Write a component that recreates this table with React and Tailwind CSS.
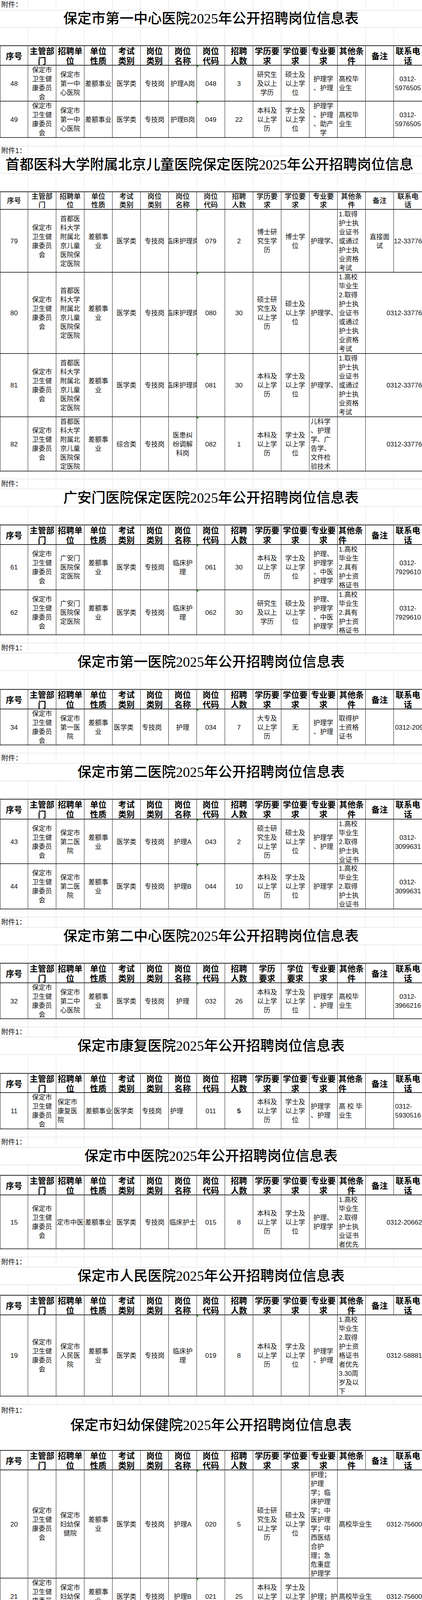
import React from 'react';

// 主管部门 is the same in every row
const ZG = '保定市\n卫生健\n康委员\n会';
const ZD = '首都医\n科大学\n附属北\n京儿童\n医院保\n定医院';

const L = (t, o = {}) => ({ t, left: true, ...o });
const clip = (t, o = {}) => ({ t, clip: true, ...o });
const over = (t, o = {}) => ({ t, over: true, ...o });
const E = { t: '', noRight: true };

const HEAD = [
    '序号', '主管部\n门', '招聘单\n位', '单位\n性质', '考试\n类别', '岗位\n类别', '岗位\n名称',
    '岗位\n代码', '招聘\n人数', '学历要\n求', '学位要\n求', '专业要\n求', '其他条\n件', '备注', '联系电\n话',
];

const sections = [
    {
        attach: '附件：', ah: 'h-[27px]', th: 'h-[44px]', bh: 'h-[45px]', hh: 'h-[52px]', gh: 'h-[22px]', tri: true,
        title: '保定市第一中心医院2025年公开招聘岗位信息表',
        rows: [
            { h: 'h-[92px]', c: ['48', ZG, '保定市\n第一中\n心医院', '差额事业', '医学类', '专技岗', '护理A岗', '048', '3', '研究生\n及以上\n学历', '硕士及\n以上学\n位', '护理学\n、护理', L('高校毕\n业生'), '', '0312-\n5976505'] },
            { h: 'h-[93px]', c: ['49', ZG, '保定市\n第一中\n心医院', '差额事业', '医学类', '专技岗', '护理B岗', '049', '22', '本科及\n以上学\n历', '学士及\n以上学\n位', '护理学\n、护理\n、助产\n学', L('高校毕\n业生'), '', '0312-\n5976505'] },
        ],
    },
    {
        attach: '附件1：', ah: 'h-[25px]', th: 'h-[45px]', bh: 'h-[45px]', hh: 'h-[47px]', gh: 'h-[20px]', tri: true, thin: true, titleLeft: true,
        title: '首都医科大学附属北京儿童医院保定医院2025年公开招聘岗位信息表',
        rows: [
            { h: 'h-[161px]', c: ['79', ZG, ZD, '差额事\n业', '医学类', '专技岗', clip('临床护理岗'), '079', '2', '博士研\n究生学\n历', '博士学\n位', L('护理学、'), L('1.取得\n护士执\n业证书\n或通过\n护士执\n业资格\n考试'), '直接面\n试', clip('0312-3377628')] },
            { h: 'h-[208px]', c: ['80', ZG, ZD, '差额事\n业', '医学类', '专技岗', clip('临床护理岗'), '080', '30', '硕士研\n究生及\n以上学\n历', '硕士及\n以上学\n位', L('护理学、'), L('1.高校\n毕业生\n2.取得\n护士执\n业证书\n或通过\n护士执\n业资格\n考试'), E, over('0312-3377628')] },
            { h: 'h-[162px]', c: ['81', ZG, ZD, '差额事\n业', '医学类', '专技岗', clip('临床护理岗'), '081', '30', '本科及\n以上学\n历', '学士及\n以上学\n位', L('护理学、'), L('1.取得\n护士执\n业证书\n或通过\n护士执\n业资格\n考试'), E, over('0312-3377628')] },
            { h: 'h-[139px]', c: ['82', ZG, ZD, '差额事\n业', '综合类', '专技岗', '医患纠\n纷调解\n科岗', '082', '1', '本科及\n以上学\n历', '学士及\n以上学\n位', L('儿科学\n、护理\n学、广\n告学、\n文件检\n验技术'), '', E, over('0312-3377628')] },
        ],
    },
    {
        attach: '附件：', ah: 'h-[26px]', th: 'h-[45px]', bh: 'h-[45px]', hh: 'h-[52px]', gh: 'h-[21px]', tri: true, qitaLeft: true,
        title: '广安门医院保定医院2025年公开招聘岗位信息表',
        rows: [
            { h: 'h-[116px]', c: ['61', ZG, '广安门\n医院保\n定医院', '差额事\n业', '医学类', '专技岗', '临床护\n理', '061', '30', '本科及\n以上学\n历', '学士及\n以上学\n位', '护理、\n护理学\n、中医\n护理学', L('1.高校\n毕业生\n2.具有\n护士资\n格证书'), '', '0312-\n7929610'] },
            { h: 'h-[115px]', c: ['62', ZG, '广安门\n医院保\n定医院', '差额事\n业', '医学类', '专技岗', '临床护\n理', '062', '30', '研究生\n及以上\n学历', '硕士及\n以上学\n位', '护理、\n护理学\n、中医\n护理学', L('1.高校\n毕业生\n2.具有\n护士资\n格证书'), '', '0312-\n7929610'] },
        ],
    },
    {
        attach: '附件1：', ah: 'h-[26px]', th: 'h-[45px]', bh: 'h-[46px]', hh: 'h-[52px]', gh: 'h-[21px]', tri: true,
        title: '保定市第一医院2025年公开招聘岗位信息表',
        rows: [
            { h: 'h-[92px]', c: ['34', ZG, '保定市\n第一医\n院', '差额事\n业', L('医学类'), L('专技岗'), '护理', '034', '7', '大专及\n以上学\n历', '无', '护理学\n、护理', L('取得护\n士资格\n证书'), '', L('0312-2093316', { nowrap: true })] },
        ],
    },
    {
        attach: '附件：', ah: 'h-[26px]', th: 'h-[45px]', bh: 'h-[45px]', hh: 'h-[53px]', gh: 'h-[21px]', tri: true,
        title: '保定市第二医院2025年公开招聘岗位信息表',
        rows: [
            { h: 'h-[114px]', c: ['43', ZG, '保定市\n第二医\n院', '差额事\n业', '医学类', '专技岗', '护理A', '043', '2', '硕士研\n究生及\n以上学\n历', '硕士及\n以上学\n位', '护理学\n、护理', L('1.高校\n毕业生\n2.取得\n护士执\n业证书'), '', '0312-\n3099631'] },
            { h: 'h-[116px]', c: ['44', ZG, '保定市\n第二医\n院', '差额事\n业', '医学类', '专技岗', '护理B', '044', '10', '本科及\n以上学\n历', '学士及\n以上学\n位', '护理学', L('1.高校\n毕业生\n2.取得\n护士执\n业证书'), '', '0312-\n3099631'] },
        ],
    },
    {
        attach: '附件1：', ah: 'h-[26px]', th: 'h-[45px]', bh: 'h-[45px]', hh: 'h-[52px]', gh: 'h-[21px]', tri: true, xl: true,
        title: '保定市第二中心医院2025年公开招聘岗位信息表',
        rows: [
            { h: 'h-[92px]', c: ['32', ZG, '保定市\n第二中\n心医院', '差额事\n业', '医学类', '专技岗', '护理', '032', '26', '本科及\n以上学\n历', '学士及\n以上学\n位', '护理学\n、护理', L('高校毕\n业生'), '', '0312-\n3966216'] },
        ],
    },
    {
        attach: '附件1：', ah: 'h-[26px]', th: 'h-[45px]', bh: 'h-[46px]', hh: 'h-[51px]', gh: 'h-[21px]', qitaLeft: true,
        title: '保定市康复医院2025年公开招聘岗位信息表',
        rows: [
            { h: 'h-[93px]', c: ['11', ZG, L('保定市\n康复医\n院'), L('差额事业'), L('医学类'), L('专技岗'), L('护理'), '011', { t: '5', bold: true }, '本科及\n以上学\n历', '学士及\n以上学\n位', L('护理学\n、护理'), L('高 校 毕\n业生'), '', L('0312-\n5930516')] },
        ],
    },
    {
        attach: '附件1：', ah: 'h-[26px]', th: 'h-[45px]', bh: 'h-[25px]', hh: 'h-[52px]', gh: 'h-[21px]',
        title: '保定市中医院2025年公开招聘岗位信息表',
        rows: [
            { h: 'h-[138px]', c: ['15', ZG, clip('保定市中医院'), '差额事业', '医学类', '专技岗', '临床护士', '015', '8', '本科及\n以上学\n历', '学士及\n以上学\n位', '护理、\n护理学', L('1.高校\n毕业生\n2.取得\n护士执\n业证书\n者优先'), E, over('0312-2066218')] },
        ],
    },
    {
        attach: '附件1：', ah: 'h-[26px]', th: 'h-[45px]', bh: 'h-[25px]', hh: 'h-[52px]', gh: 'h-[21px]', tri: true,
        title: '保定市人民医院2025年公开招聘岗位信息表',
        rows: [
            { h: 'h-[208px]', c: ['19', ZG, '保定市\n人民医\n院', '差额事\n业', '医学类', '专技岗', '临床护\n理', '019', '8', '本科及\n以上学\n历', '学士及\n以上学\n位', '护理学\n、护理', L('1.高校\n毕业生\n2.取得\n护士资\n格证书\n者优先\n3.30周\n岁及以\n下'), E, over('0312-5888180')] },
        ],
    },
    {
        attach: '附件1：', ah: 'h-[30px]', th: 'h-[45px]', bh: 'h-[41px]', hh: 'h-[52px]', tri: true, plain: true,
        title: '保定市妇幼保健院2025年公开招聘岗位信息表',
        rows: [
            { h: 'h-[277px]', c: ['20', ZG, '保定市\n妇幼保\n健院', '差额事\n业', '医学类', '专技岗', '护理A', '020', '5', '硕士研\n究生及\n以上学\n历', '硕士及\n以上学\n位', L('护理；\n护理\n学；临\n床护理\n学；中\n医护理\n学；中\n西医结\n合护\n理；急\n危重症\n护理学'), L('高校毕业生', { nowrap: true, noRight: true }), E, over('0312-7560062')] },
            { h: 'h-[92px]', c: ['21', ZG, '保定市\n妇幼保\n健院', '差额事\n业', '医学类', '专技岗', '护理B', '021', '25', '本科及\n以上学\n历', '学士及\n以上学\n位', L('护理；护', { nowrap: true, clip: true }), L('高校毕业生', { nowrap: true, noRight: true }), E, over('0312-7560062')] },
        ],
    },
];

function GridRow({ h, lines = true, children }) {
    return (
        <div className={`relative grid grid-cols-[repeat(15,72px)] ${h} ${lines ? 'border-b-2 border-[#ebebeb]' : ''}`}>
            {Array.from({ length: 15 }).map((_, i) => (
                <div key={i} className={lines && i < 14 ? 'border-r border-[#e3e3e3]' : ''} />
            ))}
            {children}
        </div>
    );
}

function DataCell({ cell, idx, tri }) {
    const c = typeof cell === 'string' ? { t: cell } : cell;
    const cls = ['relative flex items-center min-w-0 text-[17px] leading-[23px] text-[#111]'];
    cls.push(c.left ? 'justify-start text-left pl-[3px]' : 'justify-center text-center');
    cls.push(c.clip || c.over || c.nowrap ? 'whitespace-nowrap' : 'whitespace-pre-line');
    if (c.clip) cls.push('overflow-hidden');
    if (idx === 0) cls.push('border-l border-[#222]');
    if (idx < 14 && !c.noRight) cls.push('border-r border-[#222]');
    if (c.bold) cls.push('font-bold');
    return (
        <div className={cls.join(' ')}>
            {tri && idx === 7 && (
                <span className="absolute left-0 top-0 h-0 w-0 border-t-[5px] border-r-[5px] border-t-[#1f9a1f] border-r-transparent" />
            )}
            <span>{c.t}</span>
        </div>
    );
}

function Section({ s }) {
    const head = [...HEAD];
    if (s.xl) {
        head[9] = '学历\n要求';
        head[10] = '学位\n要求';
    }
    const lines = !s.plain;
    return (
        <div>
            <GridRow h={s.ah} lines={lines}>
                <div className="absolute inset-0 flex items-center pl-[3px] text-[18px] text-[#111] whitespace-nowrap">
                    {s.attach}
                </div>
            </GridRow>
            <div className={`${s.th} ${lines ? 'border-b-2 border-[#ebebeb]' : ''}`}>
                <div
                    className={`flex h-full items-center overflow-hidden whitespace-nowrap ${s.titleLeft ? 'w-[1060px] justify-start pl-[14px]' : 'justify-center'}`}
                >
                    <span className="font-['Liberation_Serif','Noto_Sans_CJK_SC',serif] text-[36px] leading-none font-medium text-black">
                        {s.title}
                    </span>
                </div>
            </div>
            <GridRow h={s.bh} lines={lines} />
            <div className={`grid grid-cols-[repeat(15,72px)] border-y-2 border-[#333] ${s.hh}`}>
                {head.map((t, i) => (
                    <div
                        key={i}
                        className={`flex items-center whitespace-pre-line text-black ${s.thin ? 'text-[18px] leading-[22px] font-medium' : 'text-[21px] leading-[25px] font-bold'} ${s.qitaLeft && i === 12 ? 'justify-start text-left pl-[2px]' : 'justify-center text-center'} ${i === 0 ? 'border-l border-[#222]' : ''} ${i < 14 ? 'border-r border-[#222]' : ''}`}
                    >
                        {t}
                    </div>
                ))}
            </div>
            {s.rows.map((r, ri) => (
                <div key={ri} className={`grid grid-cols-[repeat(15,72px)] border-b-2 border-[#444] ${r.h}`}>
                    {r.c.map((cell, i) => (
                        <DataCell key={i} cell={cell} idx={i} tri={s.tri} />
                    ))}
                </div>
            ))}
            {s.gh && <GridRow h={s.gh} />}
        </div>
    );
}

export default function App() {
    return (
        <div className="w-[1080px] overflow-hidden bg-white font-['Liberation_Sans','Noto_Sans_CJK_SC',sans-serif]">
            {sections.map((s, i) => (
                <Section key={i} s={s} />
            ))}
        </div>
    );
}
